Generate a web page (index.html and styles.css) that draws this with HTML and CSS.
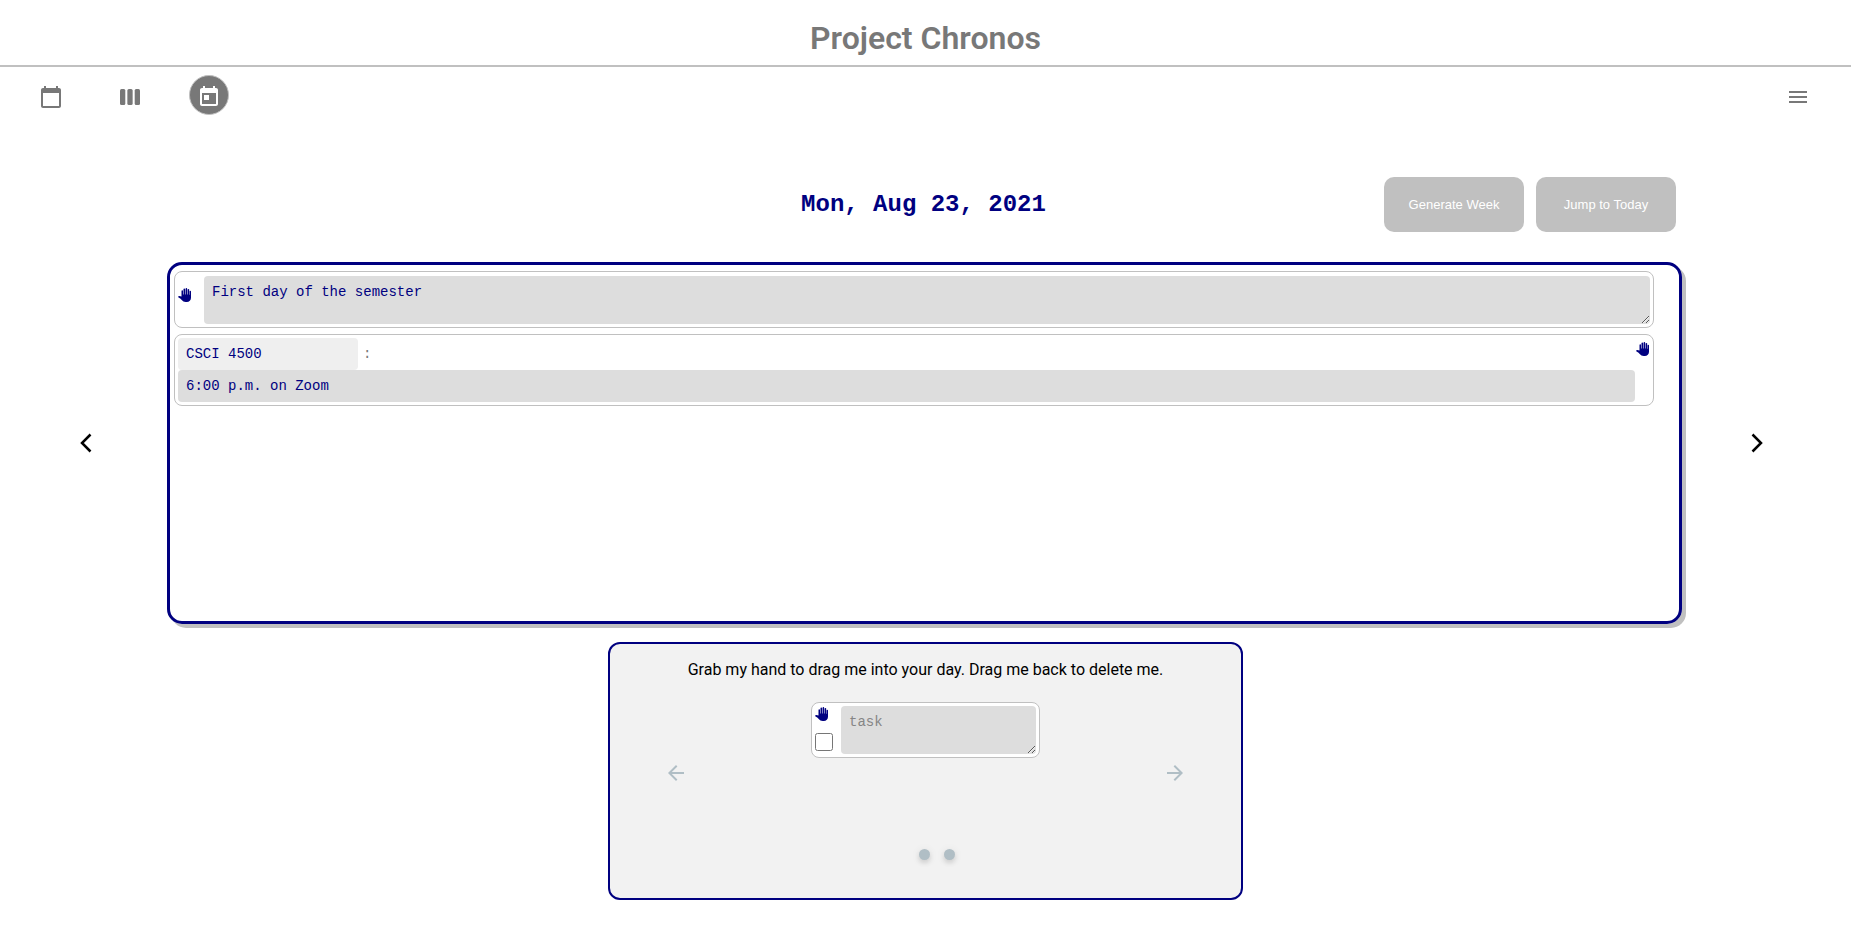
FILE: index.html
```html
<!DOCTYPE html>
<html lang="en">
<head>
<meta charset="utf-8">
<title>Project Chronos</title>
<link rel="stylesheet" href="styles.css">
</head>
<body>
<svg width="0" height="0" class="sprite" aria-hidden="true">
  <symbol id="hand" viewBox="0 0 26 28">
    <path d="M7 17V6a1.500 1.500 0 0 1 3 0v7h1V2.600a1.600 1.600 0 0 1 3.200 0V13h1V1.800a1.600 1.600 0 0 1 3.200 0V13h1V3.400a1.500 1.500 0 0 1 3 0V13.500h.8V7a1.400 1.400 0 0 1 2.800 0v12.500c0 5-3.500 8.500-8.500 8.500h-2c-3.500 0-6-1.500-8-4l-3-3.200-3.500-2C-.4 17.800.6 15.700 2.500 15.900z"/>
  </symbol>
</svg>
<header class="header"><h1 class="title">Project Chronos</h1></header>
<nav class="nav">
  <div class="views">
    <button class="view" aria-label="Month"><svg class="icon" viewBox="0 0 24 24"><path d="M20 3h-1V1h-2v2H7V1H5v2H4c-1.100 0-2 .9-2 2v16c0 1.100.9 2 2 2h16c1.100 0 2-.9 2-2V5c0-1.100-.9-2-2-2zm0 18H4V8h16v13z"/></svg></button>
    <button class="view" aria-label="Week"><svg class="icon" viewBox="0 0 24 24"><rect x="2" y="4" width="5.300" height="16" rx="1.500"/><rect x="9.350" y="4" width="5.300" height="16" rx="1.500"/><rect x="16.700" y="4" width="5.300" height="16" rx="1.500"/></svg></button>
    <button class="view view-active" aria-label="Day"><svg class="icon" viewBox="0 0 24 24"><path d="M19 3h-1V1h-2v2H8V1H6v2H5c-1.100 0-2 .9-2 2v14c0 1.100.9 2 2 2h14c1.100 0 2-.9 2-2V5c0-1.100-.9-2-2-2zm0 16H5V8h14v11zM7 10h5v5H7z"/></svg></button>
  </div>
  <button class="view" aria-label="Menu"><svg class="icon" viewBox="0 0 24 24"><path d="M3 18h18v-2H3v2zm0-5h18v-2H3v2zm0-7v2h18V6H3z"/></svg></button>
</nav>
<main>
  <div class="dayhead">
    <h2 class="date">Mon, Aug 23, 2021</h2>
    <div class="actions">
      <button class="action">Generate Week</button>
      <button class="action">Jump to Today</button>
    </div>
  </div>
  <div class="dayrow">
    <button class="step" aria-label="Previous day"><svg class="chevron" viewBox="0 0 12 20"><path d="M10.500 1.500 2 10l8.500 8.500"/></svg></button>
    <section class="day">
      <article class="card note">
        <svg class="hand"><use href="#hand"/></svg>
        <textarea class="field area" aria-label="Note">First day of the semester</textarea>
      </article>
      <article class="card event">
        <div class="event-body">
          <div class="event-title"><input class="field name" aria-label="Event name" value="CSCI 4500"><span class="colon">:</span></div>
          <input class="field" aria-label="Event details" value="6:00 p.m. on Zoom">
        </div>
        <svg class="hand"><use href="#hand"/></svg>
      </article>
    </section>
    <button class="step" aria-label="Next day"><svg class="chevron" viewBox="0 0 12 20"><path d="M1.500 1.500 10 10l-8.500 8.500"/></svg></button>
  </div>
  <section class="tray">
    <p class="hint">Grab my hand to drag me into your day. Drag me back to delete me.</p>
    <div class="carousel">
      <button class="slide" aria-label="Previous item"><svg class="icon" viewBox="0 0 24 24"><path d="M20 11H7.830l5.590-5.590L12 4l-8 8 8 8 1.410-1.410L7.830 13H20v-2z"/></svg></button>
      <article class="card task">
        <div class="task-tools">
          <svg class="hand"><use href="#hand"/></svg>
          <input class="check" type="checkbox" aria-label="Done">
        </div>
        <textarea class="field area" aria-label="Task" placeholder="task"></textarea>
      </article>
      <button class="slide" aria-label="Next item"><svg class="icon" viewBox="0 0 24 24"><path d="m12 4-1.410 1.410L16.170 11H4v2h12.170l-5.580 5.590L12 20l8-8z"/></svg></button>
    </div>
    <div class="dots">
      <button class="dot" aria-label="Item 1"></button>
      <button class="dot" aria-label="Item 2"></button>
    </div>
  </section>
</main>
</body>
</html>
```
FILE: styles.css
```css
* { box-sizing: border-box; }
body { margin: 0; background: #fff; color: #000; font-family: Roboto, sans-serif; font-size: 16px; }
button { border: 0; padding: 0; background: none; cursor: pointer; }
main { padding-bottom: 16px; }
.sprite { position: absolute; }
.icon { display: block; width: 24px; height: 24px; fill: currentColor; }

.header { padding: 19px 0 8px; border-bottom: 2px solid silver; text-align: center; }
.title { margin: 0; color: #787878; font-size: 32px; line-height: 38px; font-weight: 600; }

.nav { display: flex; justify-content: space-between; padding: 8px 33px 0 31px; }
.views { display: flex; gap: 39px; }
.view { display: grid; place-items: center; width: 40px; height: 40px; padding-top: 3px; border-radius: 50%; color: #787878; }
.view-active { border: 1px solid silver; background: #787878; color: #fff; }

.dayhead { display: grid; grid-template-columns: 1fr auto 1fr; align-items: center; margin: 62px 175px 0 171px; }
.date { grid-column: 2; margin: 0; color: navy; font: bold 24px/28px "Courier New", "Liberation Mono", monospace; }
.actions { display: flex; justify-content: flex-end; gap: 12px; }
.action { width: 140px; height: 55px; border-radius: 10px; background: silver; color: #fff; font: 13px "Liberation Sans", Arial, sans-serif; }

.dayrow { display: grid; grid-template-columns: 167px minmax(0, 1fr) 169px; margin-top: 30px; }
.step { display: grid; place-items: center; }
.step:first-child { padding-left: 4px; }
.step:last-child { padding-right: 20px; }
.chevron { width: 12px; height: 20px; fill: none; stroke: #000; stroke-width: 2.5; }
.day { display: flex; flex-direction: column; gap: 6px; min-height: 362px; padding: 6px 25px 6px 4px; border: 3px solid navy; border-radius: 15px; box-shadow: 4px 4px silver; }

.card { display: flex; padding: 3px; border: 1px solid silver; border-radius: 8px; background: #fff; }
.hand { flex: none; width: 13px; height: 14px; fill: navy; }
.field { display: block; width: 100%; height: 32px; margin: 0; padding: 0 8px; border: 0; border-radius: 4px; background: #ddd; color: navy; font: 14px/16px "Courier New", "Liberation Mono", monospace; }
.area { flex: 1; height: 48px; min-width: 0; padding: 8px; resize: both; }
.area::placeholder { color: #858585; }
.note { gap: 13px; padding-top: 4px; }
.note .hand { margin-top: 12px; }
.event { padding-right: 4px; }
.event-body { flex: 1; padding-right: 1px; }
.event-title { display: flex; align-items: center; gap: 5px; }
.name { width: 180px; background: #efefef; }
.colon { color: #787878; font: 14px "Courier New", "Liberation Mono", monospace; }
.event > .hand { margin-top: 4px; }

.tray { width: 635px; max-width: 100%; min-height: 258px; margin: 18px auto 0; border: 2px solid navy; border-radius: 12px; background: #f2f2f2; }
.hint { margin: 16px 0 22px; line-height: 20px; text-align: center; }
.carousel { display: flex; justify-content: space-between; height: 142px; padding: 0 54px; }
.slide { align-self: center; color: #b0bec5; }
.task { align-self: flex-start; width: 229px; gap: 8px; }
.task-tools { display: flex; flex-direction: column; justify-content: space-between; padding: 1px 0 3px; }
.check { width: 18px; height: 18px; margin: 0; }
.dots { display: flex; justify-content: center; gap: 14px; padding: 5px 0 0 23px; }
.dot { width: 11px; height: 11px; border-radius: 50%; background: #b0bec5; box-shadow: 0 3px 5px rgba(0, 0, 0, .12), 0 1px 10px rgba(0, 0, 0, .08); }
```
